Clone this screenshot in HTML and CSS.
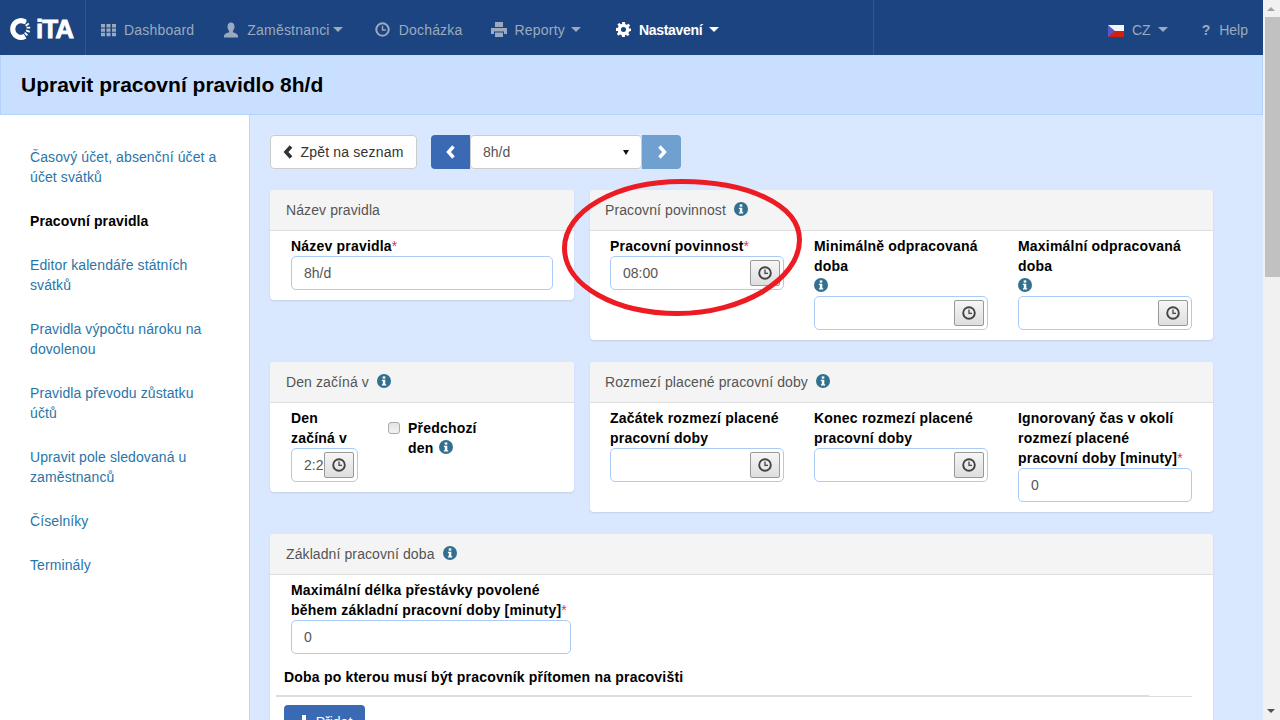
FILE: index.html
```html
<!DOCTYPE html>
<html>

<head>
    <title>Upravit pracovní pravidlo 8h/d</title>
    <link rel="stylesheet" href="styles.css">
</head>

<body>
    <!-- Shared icons -->
    <svg class="icon-defs" width="0" height="0">
        <symbol id="i-info" viewBox="0 0 14 14">
            <circle cx="7" cy="7" r="7" fill="currentColor"/>
            <rect x="5.7" y="2.4" width="2.6" height="2.2" fill="#fff"/>
            <path d="M4.9 5.7H8.3V10.2H9.2V11.6H4.9V10.2H5.8V7.1H4.9Z" fill="#fff"/>
        </symbol>
        <symbol id="i-clock" viewBox="0 0 14 14">
            <circle cx="7" cy="7" r="5.8" fill="none" stroke="currentColor" stroke-width="1.9"/>
            <path d="M7 3.6V7.4H10" fill="none" stroke="currentColor" stroke-width="1.3"/>
        </symbol>
    </svg>

    <div class="page">
        <nav class="navbar">
            <div class="nav-left">
                <a class="brand">
                    <svg class="brand-mark" viewBox="0 0 26 26" width="24" height="24">
                        <path d="M17.5 5.2A9 9 0 1 0 17.5 20.8" fill="none" stroke="#fff" stroke-width="5.5"/>
                        <path d="M18.5 3.5L16.5 7.5M21.5 7L18 9.5M23 11.5H19M22.5 16L18.5 14.5M20 20L17 17" fill="none" stroke="#fff" stroke-width="2"/>
                    </svg>
                    <span class="brand-name">iTA</span>
                </a>
                <ul class="nav-items">
                    <li class="nav-item">
                        <svg class="nav-icon" viewBox="0 0 15 14" width="15" height="14" fill="currentColor">
                            <path d="M0 1h4v3.4H0zM5.5 1h4v3.4h-4zM11 1h4v3.4h-4zM0 5.4h4v3.4H0zM5.5 5.4h4v3.4h-4zM11 5.4h4v3.4h-4zM0 9.8h4v3.4H0zM5.5 9.8h4v3.4h-4zM11 9.8h4v3.4h-4z"/>
                        </svg>
                        Dashboard
                    </li>
                    <li class="nav-item">
                        <svg class="nav-icon" viewBox="0 0 16 16" width="16" height="16" fill="currentColor">
                            <path d="M8 0.5C10.4 0.5 11.5 2.2 11.5 4.6C11.5 6.6 10.8 8 9.9 9V10.3C11.8 11 15 11.7 15 14.5V15.5H1V14.5C1 11.7 4.2 11 6.1 10.3V9C5.2 8 4.5 6.6 4.5 4.6C4.5 2.2 5.6 0.5 8 0.5Z"/>
                        </svg>
                        Zaměstnanci<span class="caret caret-tight"></span>
                    </li>
                    <li class="nav-item">
                        <svg class="nav-icon nav-icon-clock" viewBox="0 0 14 14" width="15" height="15"><use href="#i-clock"/></svg>
                        Docházka
                    </li>
                    <li class="nav-item">
                        <svg class="nav-icon" viewBox="0 0 16 15" width="16" height="15" fill="currentColor">
                            <path d="M4 0H12V5H4ZM0 6H16V12H13V9.5H3V12H0ZM4 10.5H12V15H4Z"/>
                        </svg>
                        Reporty<span class="caret caret-report"></span>
                    </li>
                    <li class="nav-item nav-item-active">
                        <svg class="nav-icon" viewBox="0 0 16 16" width="15" height="15" fill="currentColor">
                            <path fill-rule="evenodd" d="M6.5 0H9.5L10 2.3L11.6 3L13.6 1.8L15 3.9L13.4 5.5L14 7H16V9.5L14 10L13.2 11.6L14.4 13.6L12.3 15L10.7 13.6L9.5 14V16H6.5L6 14L4.4 13.4L2.4 14.6L1 12.5L2.4 10.7L1.9 9.5H0V6.5L2 6L2.7 4.4L1.5 2.4L3.6 1L5.2 2.4L6.5 2ZM8 5.3A2.7 2.7 0 1 0 8 10.7A2.7 2.7 0 1 0 8 5.3Z"/>
                        </svg>
                        <b>Nastavení</b><span class="caret"></span>
                    </li>
                </ul>
            </div>
            <div class="nav-right">
                <svg class="flag" viewBox="0 0 16 12" width="16" height="12">
                    <rect width="16" height="6" fill="#f4f4f4"/>
                    <rect y="6" width="16" height="6" fill="#d0200e"/>
                    <path d="M0 0L7 6L0 12Z" fill="#5a55c8"/>
                </svg>
                <span class="nav-lang">CZ<span class="caret"></span></span>
                <span class="nav-help"><b class="help-mark">?</b>Help</span>
            </div>
        </nav>

        <header class="title-bar">
            <h1>Upravit pracovní pravidlo 8h/d</h1>
        </header>

        <div class="layout">
            <ul class="sidebar">
                <li><a>Časový účet, absenční účet a účet svátků</a></li>
                <li class="current"><a>Pracovní pravidla</a></li>
                <li><a>Editor kalendáře státních svátků</a></li>
                <li><a>Pravidla výpočtu nároku na dovolenou</a></li>
                <li><a>Pravidla převodu zůstatku účtů</a></li>
                <li><a>Upravit pole sledovaná u zaměstnanců</a></li>
                <li><a>Číselníky</a></li>
                <li><a>Terminály</a></li>
            </ul>

            <main class="content">
                <div class="toolbar">
                    <button class="btn-back">
                        <svg viewBox="0 0 10 14" width="11" height="14"><path d="M7.5 1.5L2.5 7L7.5 12.5" fill="none" stroke="currentColor" stroke-width="3.6"/></svg>
                        Zpět na seznam
                    </button>
                    <div class="rule-picker">
                        <button class="btn-step">
                            <svg viewBox="0 0 12 14" width="12" height="14"><path d="M8.5 1.5L3.5 7L8.5 12.5" fill="none" stroke="#fff" stroke-width="3.4"/></svg>
                        </button>
                        <div class="rule-select">8h/d<span class="select-arrow"></span></div>
                        <button class="btn-step btn-step-off">
                            <svg viewBox="0 0 12 14" width="12" height="14"><path d="M3.5 1.5L8.5 7L3.5 12.5" fill="none" stroke="#fff" stroke-width="3.4"/></svg>
                        </button>
                    </div>
                </div>

                <div class="row">
                    <section class="panel panel-narrow">
                        <div class="panel-heading">Název pravidla</div>
                        <div class="panel-body">
                            <div class="field field-name">
                                <label>Název pravidla<span class="req">*</span></label>
                                <input type="text" value="8h/d">
                            </div>
                        </div>
                    </section>
                    <section class="panel panel-wide">
                        <div class="panel-heading">Pracovní povinnost <svg class="info"><use href="#i-info"/></svg></div>
                        <div class="panel-body fields">
                            <div class="field">
                                <label>Pracovní povinnost<span class="req">*</span></label>
                                <div class="time-input">
                                    <input type="text" value="08:00">
                                    <button class="clock-btn"><svg><use href="#i-clock"/></svg></button>
                                </div>
                            </div>
                            <div class="field">
                                <label>Minimálně odpracovaná doba <svg class="info info-block"><use href="#i-info"/></svg></label>
                                <div class="time-input">
                                    <input type="text">
                                    <button class="clock-btn"><svg><use href="#i-clock"/></svg></button>
                                </div>
                            </div>
                            <div class="field">
                                <label>Maximální odpracovaná doba <svg class="info info-block"><use href="#i-info"/></svg></label>
                                <div class="time-input">
                                    <input type="text">
                                    <button class="clock-btn"><svg><use href="#i-clock"/></svg></button>
                                </div>
                            </div>
                        </div>
                    </section>
                </div>

                <div class="row">
                    <section class="panel panel-narrow">
                        <div class="panel-heading">Den začíná v <svg class="info"><use href="#i-info"/></svg></div>
                        <div class="panel-body fields">
                            <div class="field field-day">
                                <label>Den začíná v</label>
                                <div class="time-input">
                                    <input type="text" value="2:20">
                                    <button class="clock-btn"><svg><use href="#i-clock"/></svg></button>
                                </div>
                            </div>
                            <div class="check-field">
                                <input type="checkbox">
                                <label>Předchozí den <svg class="info info-tight"><use href="#i-info"/></svg></label>
                            </div>
                        </div>
                    </section>
                    <section class="panel panel-wide">
                        <div class="panel-heading">Rozmezí placené pracovní doby <svg class="info"><use href="#i-info"/></svg></div>
                        <div class="panel-body fields">
                            <div class="field">
                                <label>Začátek rozmezí placené pracovní doby</label>
                                <div class="time-input">
                                    <input type="text">
                                    <button class="clock-btn"><svg><use href="#i-clock"/></svg></button>
                                </div>
                            </div>
                            <div class="field">
                                <label>Konec rozmezí placené pracovní doby</label>
                                <div class="time-input">
                                    <input type="text">
                                    <button class="clock-btn"><svg><use href="#i-clock"/></svg></button>
                                </div>
                            </div>
                            <div class="field">
                                <label>Ignorovaný čas v okolí rozmezí placené pracovní doby [minuty]<span class="req">*</span></label>
                                <input type="text" value="0">
                            </div>
                        </div>
                    </section>
                </div>

                <section class="panel">
                    <div class="panel-heading">Základní pracovní doba <svg class="info"><use href="#i-info"/></svg></div>
                    <div class="panel-body">
                        <div class="field field-break">
                            <label>Maximální délka přestávky povolené během základní pracovní doby [minuty]<span class="req">*</span></label>
                            <input type="text" value="0">
                        </div>
                        <div class="presence">
                            <h4>Doba po kterou musí být pracovník přítomen na pracovišti</h4>
                            <div class="presence-rule"></div>
                            <button class="btn-add">
                                <svg viewBox="0 0 14 14" width="14" height="14"><path d="M5 0H9V5H14V9H9V14H5V9H0V5H5Z" fill="#fff"/></svg>
                                Přidat
                            </button>
                        </div>
                    </div>
                </section>

                <!-- Red marker drawn over the screenshot -->
                <svg class="marker" viewBox="0 0 244 140" width="244" height="140">
                    <path d="M121 3.5C185 3.5 238.5 26 238.5 62C238.5 102 180 135.5 117 135.5C55 135.5 3.5 108 3.5 70C3.5 33 55 3.5 121 3.5Z" fill="none" stroke="#ed1c24" stroke-width="5"/>
                </svg>
            </main>
        </div>
    </div>

    <div class="scrollbar">
        <span class="scroll-up"></span>
        <div class="scroll-thumb"></div>
        <span class="scroll-down"></span>
    </div>
</body>

</html>
```

FILE: styles.css
```css
* {
    box-sizing: border-box;
}

html, body {
    height: 100%;
}

body {
    margin: 0;
    display: flex;
    height: 720px;
    overflow: hidden;
    font-family: "Liberation Sans", Arial, sans-serif;
    font-size: 14px;
    line-height: 20px;
    color: #333;
    background-color: #fff;
}

ul {
    list-style: none;
    margin: 0;
    padding: 0;
}

.icon-defs {
    position: absolute;
}

.page {
    width: 1263px;
    height: 720px;
    display: flex;
    flex-direction: column;
    overflow: hidden;
}

/* Top navigation */
.navbar {
    height: 55px;
    flex: none;
    display: flex;
    background-color: #1b4480;
    color: #9caabf;
    letter-spacing: 0.2px;
}

.nav-left {
    width: 874px;
    display: flex;
    border-right: 1px solid #28579a;
}

.brand {
    width: 86px;
    display: flex;
    align-items: center;
    padding-left: 9px;
    padding-top: 3px;
    border-right: 1px solid #28579a;
}

.brand-mark {
    flex: none;
    margin-right: 3px;
}

.brand-name {
    font-size: 26px;
    font-weight: bold;
    letter-spacing: -1px;
    color: #fff;
    -webkit-text-stroke: 0.8px #fff;
}

.nav-items {
    display: flex;
    align-items: center;
    padding-left: 15px;
    padding-top: 4px;
}

.nav-item {
    display: flex;
    align-items: center;
    margin-right: 28px;
}

.nav-item:first-child {
    margin-right: 29px;
}

.nav-item:nth-child(2) {
    margin-right: 32px;
}

.nav-item:nth-child(4) {
    margin-right: 35px;
}

.nav-item-active {
    color: #fff;
    letter-spacing: -0.3px;
}

.nav-icon {
    flex: none;
    margin-right: 8px;
}

.nav-icon-clock {
    margin-right: 9px;
}

.caret {
    display: inline-block;
    width: 0;
    height: 0;
    margin-left: 7px;
    border-top: 5px solid currentColor;
    border-left: 5px solid transparent;
    border-right: 5px solid transparent;
}

.caret-tight {
    margin-left: 3px;
}

.caret-report {
    margin-left: 6px;
}

.nav-right {
    flex: 1;
    display: flex;
    align-items: center;
    justify-content: flex-end;
    padding-right: 15px;
    padding-top: 4px;
    letter-spacing: 0;
}

.flag {
    margin-right: 8px;
    margin-top: 2px;
    box-shadow: inset 0 0 0 1px rgba(0, 0, 0, 0.1);
}

.nav-lang {
    display: flex;
    align-items: center;
    margin-right: 34px;
}

.nav-help {
    display: flex;
    align-items: center;
}

.help-mark {
    margin-right: 9px;
}

/* Page title */
.title-bar {
    height: 60px;
    flex: none;
    display: flex;
    align-items: center;
    padding: 0 20px;
    background-color: #c9dfff;
    border: 1px solid #b5d2fd;
    border-top: none;
}

h1 {
    margin: 0;
    font-size: 21px;
    font-weight: bold;
    color: #000;
}

.layout {
    flex: 1;
    min-height: 0;
    display: flex;
}

/* Left menu */
.sidebar {
    width: 250px;
    flex: none;
    padding: 20px 29px 0 0;
    background-color: #fff;
    border-right: 1px solid #bcd3fb;
    letter-spacing: 0.1px;
}

.sidebar li {
    padding: 12px 0 12px 30px;
}

.sidebar a {
    color: #2a75a8;
}

.sidebar .current a {
    font-weight: bold;
    color: #000;
}

/* Main area */
.content {
    position: relative;
    flex: 1;
    padding: 20px 50px 0 20px;
    background-color: #d9e8fe;
    overflow: hidden;
}

.toolbar {
    display: flex;
    gap: 14px;
    margin-bottom: 21px;
}

button {
    font-family: inherit;
    font-size: 14px;
}

.btn-back {
    width: 147px;
    height: 34px;
    padding: 0;
    display: flex;
    align-items: center;
    justify-content: center;
    gap: 6px;
    color: #333;
    letter-spacing: 0.2px;
    background-color: #fff;
    border: 1px solid #ccc;
    border-radius: 4px;
}

.rule-picker {
    display: flex;
}

.btn-step {
    width: 39px;
    height: 34px;
    padding: 0;
    display: flex;
    align-items: center;
    justify-content: center;
    background-color: #3a6ab4;
    border: none;
    border-radius: 4px 0 0 4px;
}

.btn-step-off {
    background-color: #6fa0d0;
    border-radius: 0 4px 4px 0;
}

.rule-select {
    width: 172px;
    height: 34px;
    display: flex;
    align-items: center;
    justify-content: space-between;
    padding: 0 12px;
    color: #555;
    background-color: #fff;
    border: 1px solid #ccc;
    border-radius: 4px;
}

.select-arrow {
    width: 0;
    height: 0;
    border-top: 5px solid #111;
    border-left: 3.5px solid transparent;
    border-right: 3.5px solid transparent;
}

.row {
    display: flex;
    align-items: flex-start;
    gap: 16px;
}

.panel {
    margin-bottom: 22px;
    background-color: #fff;
    border-radius: 4px;
    box-shadow: 0 1px 2px rgba(0, 0, 0, 0.1);
}

.panel-narrow {
    width: 304px;
    flex: none;
}

.panel-wide {
    width: 623px;
    flex: none;
}

.panel-heading {
    height: 41px;
    padding: 10px 16px;
    color: #555;
    letter-spacing: 0.1px;
    background-color: #f4f4f4;
    border-bottom: 1px solid #ddd;
    border-radius: 4px 4px 0 0;
}

.panel-wide .panel-heading {
    padding-left: 15px;
}

.info {
    width: 14px;
    height: 14px;
    margin-left: 4px;
    vertical-align: -1px;
    color: #31708f;
}

.info-block {
    display: block;
    margin: 2px 0 4px;
}

.info-tight {
    margin-left: 1px;
}

.panel-body {
    padding: 5px 21px 10px 21px;
}

.panel-wide .panel-body {
    padding-left: 20px;
}

.fields {
    display: flex;
    gap: 30px;
}

.field {
    width: 174px;
    flex: none;
}

.field-name {
    width: 262px;
}

.field-day {
    width: 67px;
}

.field-break {
    width: 280px;
}

label {
    display: block;
    font-weight: bold;
    color: #000;
    letter-spacing: 0.2px;
}

.req {
    font-weight: normal;
    color: #e8304a;
}

input[type="text"] {
    display: block;
    width: 100%;
    height: 34px;
    padding: 6px 12px;
    font-family: inherit;
    font-size: 14px;
    color: #555;
    background-color: #fff;
    border: 1px solid #a9cbf7;
    border-radius: 5px;
    outline: none;
}

.time-input {
    position: relative;
}

.time-input input[type="text"] {
    padding-right: 34px;
}

.clock-btn {
    position: absolute;
    top: 4px;
    right: 4px;
    width: 30px;
    height: 26px;
    padding: 0;
    display: flex;
    align-items: center;
    justify-content: center;
    color: #444;
    background: linear-gradient(#f6f6f6, #dedede);
    border: 1px solid #999;
    border-radius: 2px;
}

.clock-btn svg {
    width: 14px;
    height: 14px;
}

.check-field {
    display: flex;
    gap: 8px;
    width: 100px;
    padding-top: 10px;
}

.check-field label {
    width: 74px;
}

input[type="checkbox"] {
    appearance: none;
    flex: none;
    width: 12px;
    height: 12px;
    margin: 4px 0 0;
    background: linear-gradient(#e4e4e4, #f2f2f2);
    border: 1px solid #aaa;
    border-radius: 3px;
}

.presence {
    margin-left: -15px;
    padding-top: 13px;
}

h4 {
    margin: 0 0 8px 8px;
    font-size: 14px;
    font-weight: bold;
    color: #000;
    letter-spacing: 0.2px;
}

.presence-rule {
    width: 916px;
    height: 2px;
    margin-bottom: 8px;
    background: linear-gradient(#ddd, #ddd) no-repeat 0 0 / 873px 1px;
    border-bottom: 1px solid #ddd;
}

.btn-add {
    width: 81px;
    height: 34px;
    margin-left: 8px;
    padding: 0;
    display: flex;
    align-items: center;
    justify-content: center;
    gap: 5px;
    color: #fff;
    background-color: #3a6ab4;
    border: none;
    border-radius: 4px;
}

.marker {
    position: absolute;
    left: 311px;
    top: 63px;
}

/* Fake window scrollbar */
.scrollbar {
    position: relative;
    width: 17px;
    height: 720px;
    flex: none;
    background-color: #f1f1f1;
}

.scroll-thumb {
    position: absolute;
    top: 17px;
    left: 2px;
    width: 15px;
    height: 260px;
    background-color: #c1c1c1;
}

.scroll-up, .scroll-down {
    position: absolute;
    left: 4px;
    width: 0;
    height: 0;
    border-left: 4px solid transparent;
    border-right: 4px solid transparent;
}

.scroll-up {
    top: 7px;
    border-bottom: 4px solid #a3a3a3;
}

.scroll-down {
    bottom: 7px;
    border-top: 4px solid #505050;
}
```
